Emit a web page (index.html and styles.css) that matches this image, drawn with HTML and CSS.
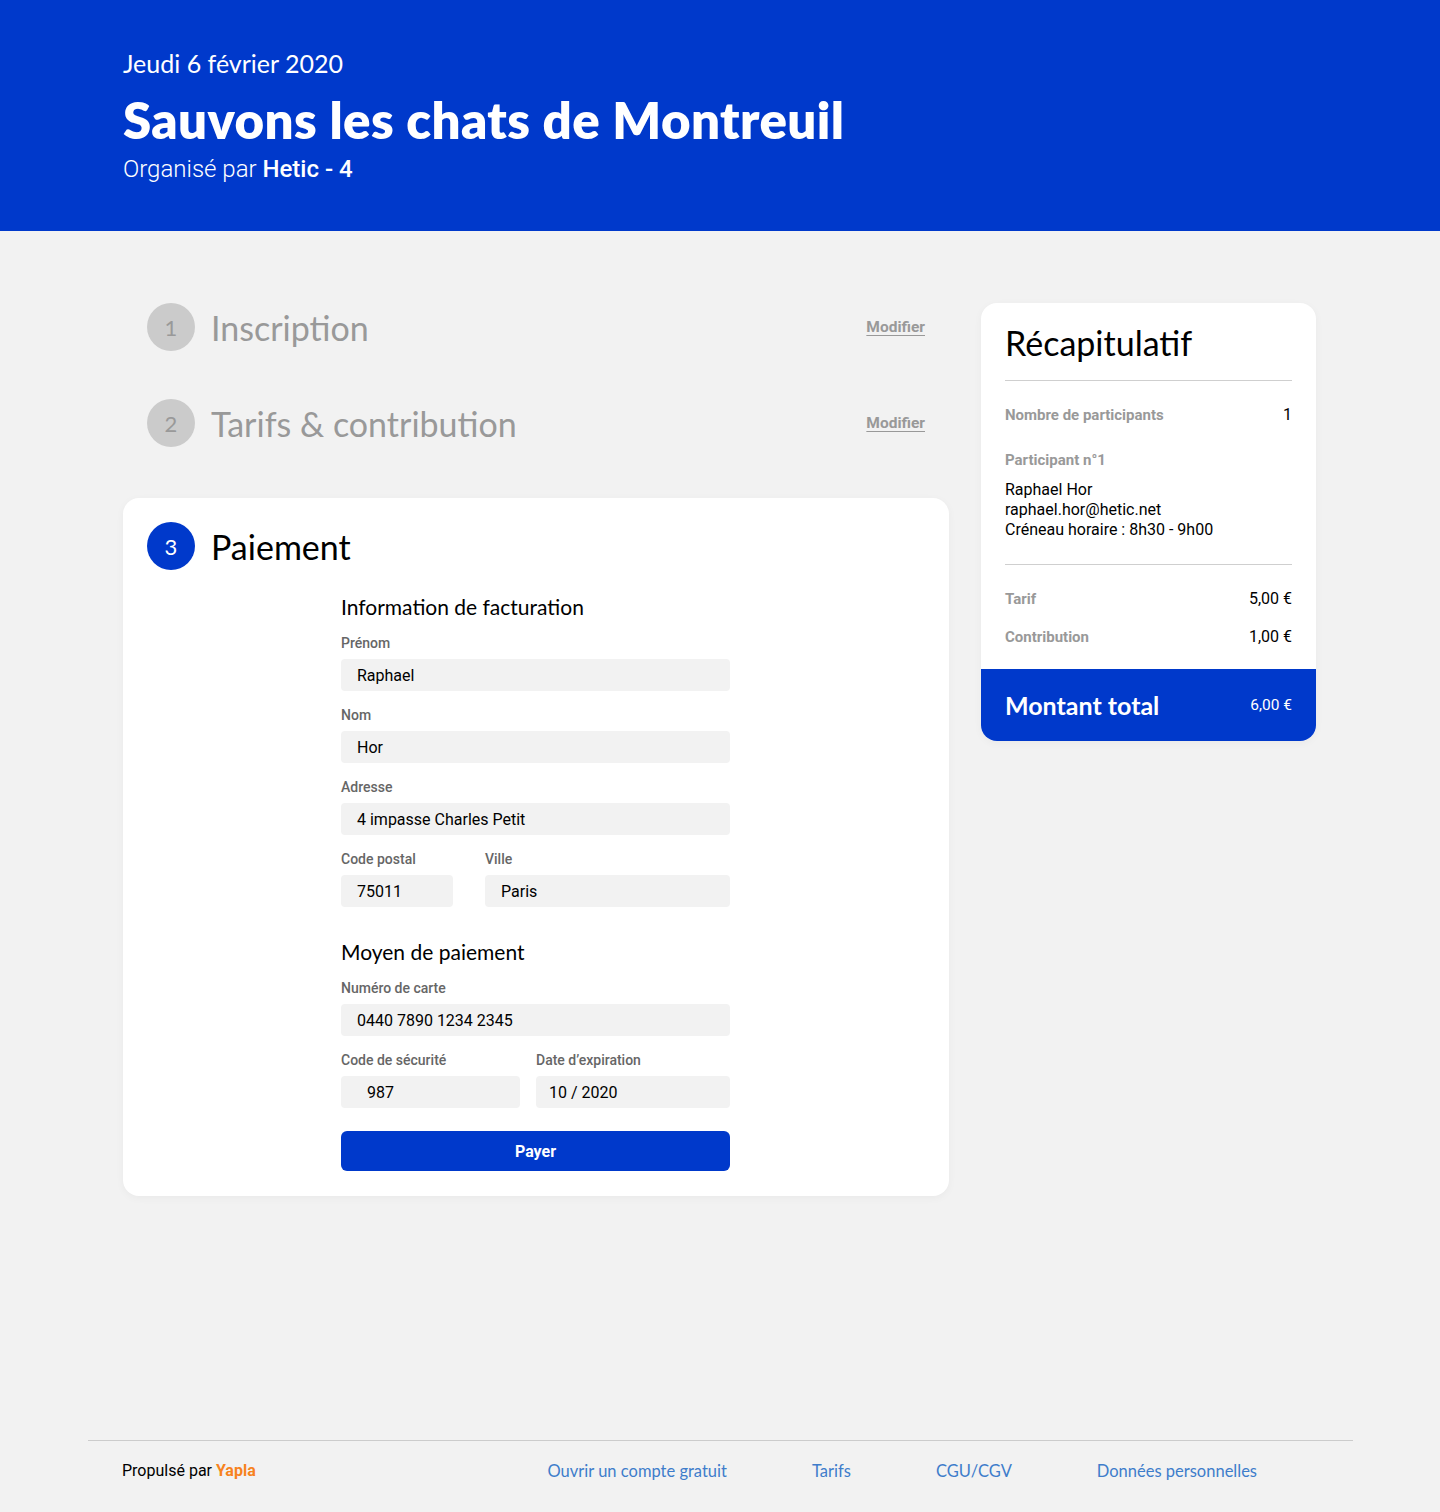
FILE: index.html
```html
<!DOCTYPE html>
<html lang="fr">
<head>
<meta charset="utf-8">
<title>Sauvons les chats de Montreuil</title>
<link rel="stylesheet" href="styles.css">
</head>
<body>
<header class="hero">
  <div class="hero-inner">
    <p class="hero-date">Jeudi 6 février 2020</p>
    <h1 class="hero-title">Sauvons les chats de Montreuil</h1>
    <p class="hero-org">Organisé par <strong>Hetic - 4</strong></p>
  </div>
</header>

<main class="layout">
  <section class="steps">
    <div class="step step-done">
      <span class="step-num">1</span>
      <h2 class="step-title">Inscription</h2>
      <a class="step-edit" href="#">Modifier</a>
    </div>
    <div class="step step-done">
      <span class="step-num">2</span>
      <h2 class="step-title">Tarifs &amp; contribution</h2>
      <a class="step-edit" href="#">Modifier</a>
    </div>

    <div class="card pay-card">
      <div class="step step-active">
        <span class="step-num">3</span>
        <h2 class="step-title">Paiement</h2>
      </div>

      <form class="pay-form">
        <h3 class="form-heading">Information de facturation</h3>
        <div class="field">
          <label>Prénom</label>
          <div class="input">Raphael</div>
        </div>
        <div class="field">
          <label>Nom</label>
          <div class="input">Hor</div>
        </div>
        <div class="field">
          <label>Adresse</label>
          <div class="input">4 impasse Charles Petit</div>
        </div>
        <div class="field-row row-city">
          <div class="field">
            <label>Code postal</label>
            <div class="input">75011</div>
          </div>
          <div class="field">
            <label>Ville</label>
            <div class="input">Paris</div>
          </div>
        </div>

        <h3 class="form-heading heading-gap">Moyen de paiement</h3>
        <div class="field">
          <label>Numéro de carte</label>
          <div class="input">0440 7890 1234 2345</div>
        </div>
        <div class="field-row row-card">
          <div class="field">
            <label>Code de sécurité</label>
            <div class="input input-cvc">987</div>
          </div>
          <div class="field">
            <label>Date d’expiration</label>
            <div class="input input-exp">10 / 2020</div>
          </div>
        </div>
        <button type="button" class="pay-btn">Payer</button>
      </form>
    </div>
  </section>

  <aside class="card recap">
    <div class="recap-body">
      <h2 class="recap-title">Récapitulatif</h2>
      <div class="recap-section">
        <div class="recap-line">
          <span class="recap-label">Nombre de participants</span>
          <span class="recap-value">1</span>
        </div>
        <span class="recap-label participant">Participant n°1</span>
        <p class="recap-person">Raphael Hor<br>raphael.hor@hetic.net<br>Créneau horaire : 8h30 - 9h00</p>
      </div>
      <div class="recap-section recap-prices">
        <div class="recap-line">
          <span class="recap-label">Tarif</span>
          <span class="recap-value">5,00 €</span>
        </div>
        <div class="recap-line">
          <span class="recap-label">Contribution</span>
          <span class="recap-value">1,00 €</span>
        </div>
      </div>
    </div>
    <div class="recap-total">
      <span class="total-label">Montant total</span>
      <span class="total-value">6,00 €</span>
    </div>
  </aside>
</main>

<footer class="site-footer">
  <p class="powered">Propulsé par <span class="brand">Yapla</span></p>
  <nav class="footer-links">
    <a href="#">Ouvrir un compte gratuit</a>
    <a href="#">Tarifs</a>
    <a href="#">CGU/CGV</a>
    <a href="#">Données personnelles</a>
  </nav>
</footer>
</body>
</html>
```

FILE: styles.css
```css
* { box-sizing: border-box; }

html, body {
  margin: 0;
  padding: 0;
}

body {
  background: #f2f2f2;
  font-family: Roboto, "Liberation Sans", sans-serif;
  color: #000;
}

p, h1, h2, h3 { margin: 0; font-weight: normal; }

/* Header */
.hero {
  background: #0039cb;
  color: #fff;
  height: 231px;
}
.hero-inner {
  max-width: 1194px;
  margin: 0 auto;
  padding-top: 49px;
}
.hero-date {
  font-family: Lato, "Open Sans", sans-serif;
  font-size: 25px;
  line-height: 28px;
}
.hero-title {
  font-family: Lato, "Open Sans", sans-serif;
  font-weight: 800;
  font-size: 51px;
  line-height: 58px;
  margin-top: 14px;
  letter-spacing: 0.4px;
}
.hero-org {
  font-family: Roboto, sans-serif;
  font-weight: 300;
  font-size: 24px;
  line-height: 28px;
  margin-top: 6px;
}
.hero-org strong { font-weight: 500; }

/* Layout */
.layout {
  max-width: 1194px;
  margin: 0 auto;
  padding: 72px 0 244px;
  display: flex;
  gap: 32px;
  align-items: flex-start;
}
.steps {
  width: 826px;
  display: flex;
  flex-direction: column;
  gap: 48px;
}
.card {
  background: #fff;
  border-radius: 16px;
  box-shadow: 0 2px 8px rgba(0, 0, 0, 0.04);
}

/* Steps */
.step {
  display: flex;
  align-items: center;
  padding: 0 24px;
  height: 48px;
}
.step-num {
  width: 48px;
  height: 48px;
  border-radius: 50%;
  display: flex;
  align-items: center;
  justify-content: center;
  font-family: Lato, "Open Sans", sans-serif;
  font-size: 22px;
  flex-shrink: 0;
}
.step-title {
  font-family: Lato, "Open Sans", sans-serif;
  font-size: 34px;
  margin-left: 16px;
  flex: 1;
}
.step-done .step-num { background: #cbcbcb; color: #999; }
.step-done .step-title { color: #999; }
.step-edit {
  font-family: Roboto, sans-serif;
  font-size: 15.5px;
  font-weight: 700;
  color: #999;
  text-decoration: underline;
  text-underline-offset: 3px;
}
.step-active .step-num { background: #0039cb; color: #fff; }
.step-active .step-title { color: #000; }

.steps .pay-card { margin-top: 3px; }
.pay-card {
  padding: 24px 0 25px;
}
.pay-card .step { padding: 0 24px; }

/* Form */
.pay-form {
  width: 389px;
  margin: 25px 0 0 218px;
  display: flex;
  flex-direction: column;
  gap: 16px;
}
.form-heading {
  font-family: Lato, "Open Sans", sans-serif;
  font-size: 21px;
  line-height: 24px;
  color: #000;
}
.heading-gap { margin-top: 17px; }
.field {
  display: flex;
  flex-direction: column;
  gap: 8px;
}
.field label {
  font-size: 14px;
  line-height: 16px;
  font-weight: 500;
  color: #666;
}
.input {
  height: 32px;
  background: #f2f2f2;
  border-radius: 4px;
  padding: 0 16px;
  font-size: 16px;
  line-height: 33px;
  color: #000;
}
.field-row { display: flex; }
.row-city { gap: 32px; }
.row-city .field:first-child { width: 112px; }
.row-city .field:last-child { flex: 1; }
.row-card { gap: 16px; }
.row-card .field:first-child { width: 179px; }
.row-card .field:last-child { flex: 1; }
.input-cvc { padding-left: 26px; }
.input-exp { padding-left: 13px; }

.pay-btn {
  margin-top: 7px;
  height: 40px;
  border: 0;
  border-radius: 6px;
  background: #0039cb;
  color: #fff;
  font-family: Roboto, sans-serif;
  font-weight: 700;
  font-size: 16px;
  cursor: pointer;
}

/* Recap */
.recap {
  width: 335px;
  overflow: hidden;
}
.recap-body { padding: 24px 24px 23px; }
.recap-title {
  font-family: Lato, "Open Sans", sans-serif;
  font-size: 34px;
  line-height: 32px;
  padding-bottom: 21px;
  border-bottom: 1px solid #cfcfcf;
}
.recap-section {
  display: flex;
  flex-direction: column;
  padding: 25px 0 24px;
  border-bottom: 1px solid #cfcfcf;
}
.recap-prices {
  border-bottom: 0;
  padding-bottom: 0;
  gap: 20px;
}
.recap-line {
  display: flex;
  justify-content: space-between;
  align-items: center;
}
.recap-label {
  font-size: 15px;
  line-height: 18px;
  font-weight: 700;
  color: #999;
}
.recap-value {
  font-size: 16px;
  line-height: 18px;
  color: #000;
}
.participant { margin-top: 27px; }
.recap-person {
  margin-top: 11px;
  font-size: 16px;
  line-height: 20px;
}
.recap-total {
  background: #0039cb;
  color: #fff;
  height: 72px;
  padding: 0 24px;
  display: flex;
  align-items: center;
  justify-content: space-between;
}
.total-label {
  font-family: Lato, "Open Sans", sans-serif;
  font-weight: 700;
  font-size: 25px;
}
.total-value { font-size: 15.5px; }

/* Footer */
.site-footer {
  margin: 0 87px 0 88px;
  border-top: 1px solid #cccccc;
  height: 72px;
  display: flex;
  align-items: flex-start;
  justify-content: space-between;
  padding: 20px 96px 0 34px;
}
.powered {
  font-size: 16px;
  line-height: 20px;
  color: #000;
}
.brand {
  color: #f7831e;
  font-weight: 700;
}
.footer-links {
  display: flex;
  gap: 85px;
}
.footer-links a {
  font-family: Lato, "Open Sans", sans-serif;
  font-size: 16.5px;
  line-height: 20px;
  color: #3e7dcb;
  text-decoration: none;
}
```
